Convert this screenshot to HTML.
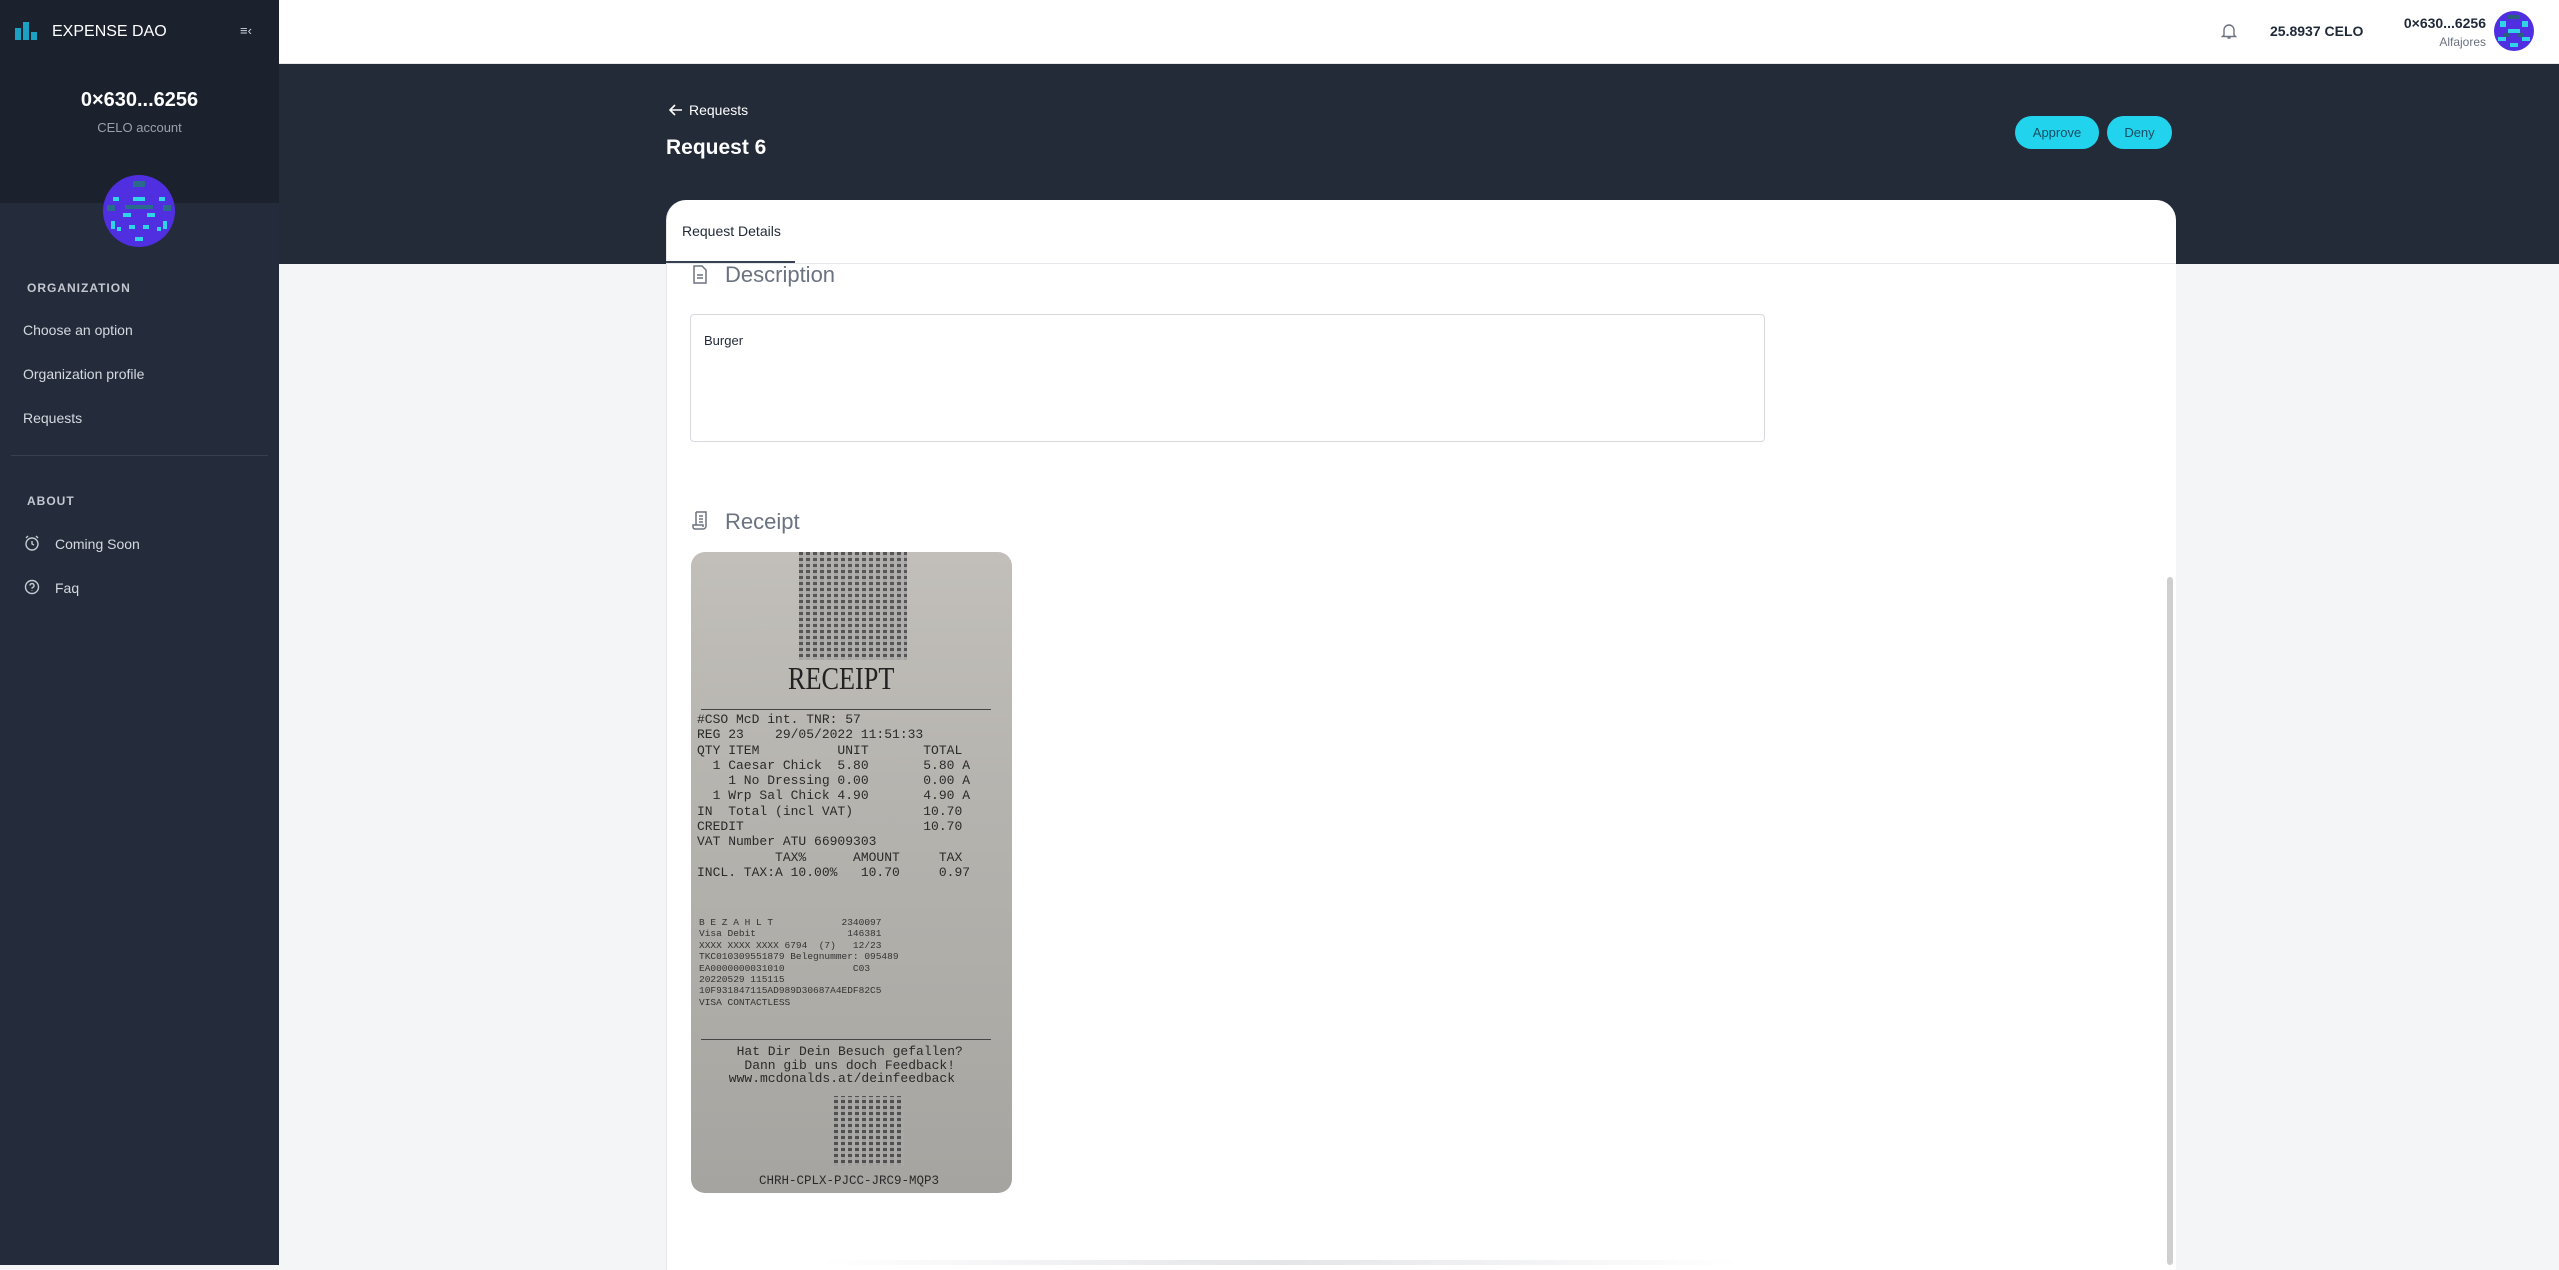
<!DOCTYPE html>
<html><head><meta charset="utf-8"><style>
*{margin:0;padding:0;box-sizing:border-box}
body{width:2559px;height:1265px;overflow:hidden;background:#f4f5f7;font-family:"Liberation Sans",sans-serif;position:relative}
.a{position:absolute}
#sb{left:0;top:0;width:279px;height:1265px;background:#242c3b}
#sbt{left:0;top:0;width:279px;height:203px;background:#1b212d}
.nav{color:#d5d9e0;font-size:14px}
.sec{color:#c3c8d0;font-size:12px;font-weight:bold;letter-spacing:1px}
.mono{font-family:"Liberation Mono",monospace;color:#2a2a2a;white-space:pre;line-height:1}
.qr{background:repeating-linear-gradient(0deg,rgba(170,170,170,.9) 0 3px,transparent 3px 6px),repeating-linear-gradient(90deg,#333 0 4px,#aaa 4px 7px);opacity:.75}
</style></head><body>
<div class="a" id="sb"></div><div class="a" id="sbt"></div>
<svg class="a" style="left:15px;top:22px" width="24" height="18"><rect x="0" y="6" width="6" height="12" fill="#1aa1c4"/><rect x="8" y="0" width="6" height="18" fill="#1aa1c4"/><rect x="16" y="10" width="6" height="8" fill="#1aa1c4"/></svg>
<div class="a" style="left:52px;top:23px;color:#fff;font-size:16px">EXPENSE DAO</div>
<div class="a" style="left:240px;top:23px;color:#cfd4db;font-size:13px">≡‹</div>
<div class="a" style="left:0;width:279px;top:89px;text-align:center;color:#fff;font-size:20px;font-weight:bold">0×630...6256</div>
<div class="a" style="left:0;width:279px;top:120px;text-align:center;color:#9aa1ad;font-size:13px">CELO account</div>
<svg class="a" style="left:103px;top:175px" width="72" height="72"><circle cx="36" cy="36" r="36" fill="#4f2fe0"/><g fill="#2fd4e8"><rect x="10" y="22" width="6" height="4"/><rect x="56" y="22" width="6" height="4"/><rect x="30" y="22" width="12" height="4"/><rect x="20" y="38" width="8" height="4"/><rect x="44" y="38" width="8" height="4"/><rect x="8" y="46" width="4" height="8"/><rect x="60" y="46" width="4" height="8"/><rect x="32" y="62" width="8" height="4"/><rect x="14" y="52" width="4" height="4"/><rect x="54" y="52" width="4" height="4"/><rect x="26" y="50" width="6" height="4"/><rect x="40" y="50" width="6" height="4"/></g><g fill="#2a6a8a"><rect x="30" y="6" width="12" height="6"/><rect x="22" y="30" width="28" height="4"/><rect x="4" y="30" width="8" height="6"/><rect x="60" y="30" width="8" height="6"/></g></svg>
<div class="a sec" style="left:27px;top:281px">ORGANIZATION</div>
<div class="a nav" style="left:23px;top:322px">Choose an option</div>
<div class="a nav" style="left:23px;top:366px">Organization profile</div>
<div class="a nav" style="left:23px;top:410px">Requests</div>
<div class="a" style="left:11px;top:455px;width:257px;height:1px;background:#36404f"></div>
<div class="a sec" style="left:27px;top:494px">ABOUT</div>
<svg class="a" style="left:24px;top:535px" width="16" height="16" fill="none" stroke="#c5cad2" stroke-width="1.4"><circle cx="8" cy="9" r="6"/><path d="M8 6v3l2 1M2 3l2-2M14 3l-2-2"/></svg>
<div class="a nav" style="left:55px;top:536px">Coming Soon</div>
<svg class="a" style="left:24px;top:579px" width="16" height="16" fill="none" stroke="#c5cad2" stroke-width="1.4"><circle cx="8" cy="8" r="6.5"/><path d="M6 6.5a2 2 0 1 1 2.5 2c-.5.2-.5.6-.5 1.2M8 11.5v.5"/></svg>
<div class="a nav" style="left:55px;top:580px">Faq</div>

<div class="a" style="left:279px;top:0;width:2280px;height:64px;background:#fff;border-bottom:1px solid #e5e7eb"></div>
<svg class="a" style="left:2221px;top:22px" width="16" height="18" fill="none" stroke="#6b7280" stroke-width="1.4"><path d="M3 13V8a5 5 0 0 1 10 0v5l1.5 1.5h-13z M6.5 16h3"/></svg>
<div class="a" style="left:2270px;top:23px;color:#1f2937;font-size:14px;font-weight:bold">25.8937 CELO</div>
<div class="a" style="left:2380px;width:106px;text-align:right;top:15px;color:#1f2937;font-size:14px;font-weight:bold">0×630...6256</div>
<div class="a" style="left:2380px;width:106px;text-align:right;top:35px;color:#6b7280;font-size:12px">Alfajores</div>
<svg class="a" style="left:2494px;top:11px" width="40" height="40"><circle cx="20" cy="20" r="20" fill="#4f2fe0"/><g fill="#2fd4e8"><rect x="6" y="10" width="6" height="6"/><rect x="28" y="10" width="6" height="6"/><rect x="14" y="18" width="12" height="4"/><rect x="4" y="26" width="8" height="4"/><rect x="28" y="26" width="8" height="4"/><rect x="16" y="32" width="8" height="4"/></g><g fill="#26607a"><rect x="14" y="4" width="12" height="4"/><rect x="10" y="22" width="6" height="4"/><rect x="24" y="22" width="6" height="4"/></g></svg>

<div class="a" style="left:279px;top:64px;width:2280px;height:200px;background:#232a38"></div>
<svg class="a" style="left:668px;top:102px" width="16" height="16" fill="none" stroke="#fff" stroke-width="1.6"><path d="M14 8H2M7 3L2 8l5 5"/></svg>
<div class="a" style="left:689px;top:102px;color:#fff;font-size:14px">Requests</div>
<div class="a" style="left:666px;top:136px;color:#fff;font-size:21px;font-weight:bold">Request 6</div>
<div class="a" style="left:2015px;top:116px;width:84px;height:33px;border-radius:17px;background:#22d3ee;color:#164e63;font-size:13px;text-align:center;line-height:33px">Approve</div>
<div class="a" style="left:2107px;top:116px;width:65px;height:33px;border-radius:17px;background:#22d3ee;color:#164e63;font-size:13px;text-align:center;line-height:33px">Deny</div>

<div class="a" style="left:666px;top:200px;width:1510px;height:1070px;background:#fff;border-radius:20px 20px 0 0;border-left:1px solid #e5e7eb"></div>
<div class="a" style="left:682px;top:223px;color:#1f2937;font-size:14px">Request Details</div>
<div class="a" style="left:666px;top:263px;width:1510px;height:1px;background:#e5e7eb"></div>
<div class="a" style="left:666px;top:261px;width:129px;height:2px;background:#374151"></div>
<div class="a" style="left:2167px;top:577px;width:6px;height:688px;border-radius:3px;background:#cfcfcf"></div>

<svg class="a" style="left:692px;top:265px" width="16" height="19" fill="none" stroke="#6b7280" stroke-width="1.5"><path d="M2 1h8l4 4v13H2z M5 10h6M5 13h6"/></svg>
<div class="a" style="left:725px;top:262px;color:#6b7280;font-size:22px">Description</div>
<div class="a" style="left:690px;top:314px;width:1075px;height:128px;border:1.5px solid #d6d9de;border-radius:4px"></div>
<div class="a" style="left:704px;top:333px;color:#1f2937;font-size:13px">Burger</div>
<svg class="a" style="left:692px;top:511px" width="17" height="19" fill="none" stroke="#6b7280" stroke-width="1.5"><path d="M4 1h10v14a3 3 0 0 1-3 3H3a2 2 0 0 1-2-2v-2h10v2 M4 1v13 M7 5h4M7 8h4M7 11h4"/></svg>
<div class="a" style="left:725px;top:509px;color:#6b7280;font-size:22px">Receipt</div>

<div class="a" style="left:691px;top:552px;width:321px;height:641px;border-radius:14px;background:linear-gradient(180deg,#c2bfba,#b5b3ae 40%,#aeaca7 70%,#a6a4a0);overflow:hidden">
<div class="a qr" style="left:108px;top:0;width:108px;height:108px"></div>
<div class="a mono" style="left:97px;top:110px;font-size:32px;font-family:'Liberation Serif',serif;color:#222;transform:scaleX(.82);transform-origin:left">RECEIPT</div>
<div class="a" style="left:10px;top:157px;width:290px;height:1px;background:#444"></div>
<div class="a mono" style="left:6px;top:160px;font-size:13px;line-height:15.3px">#CSO McD int. TNR: 57
REG 23    29/05/2022 11:51:33
QTY ITEM          UNIT       TOTAL
  1 Caesar Chick  5.80       5.80 A
    1 No Dressing 0.00       0.00 A
  1 Wrp Sal Chick 4.90       4.90 A
IN  Total (incl VAT)         10.70
CREDIT                       10.70
VAT Number ATU 66909303
          TAX%      AMOUNT     TAX
INCL. TAX:A 10.00%   10.70     0.97</div>
<div class="a mono" style="left:8px;top:365px;font-size:9.5px;line-height:1.2;color:#333">B E Z A H L T            2340097
Visa Debit                146381
XXXX XXXX XXXX 6794  (7)   12/23
TKC010309551879 Belegnummer: 095489
EA0000000031010            C03
20220529 115115
10F931847115AD989D30687A4EDF82C5
VISA CONTACTLESS</div>
<div class="a" style="left:10px;top:487px;width:290px;height:1px;background:#444"></div>
<div class="a mono" style="left:30px;top:493px;font-size:13px;line-height:1.05;text-align:center">  Hat Dir Dein Besuch gefallen?
  Dann gib uns doch Feedback!
www.mcdonalds.at/deinfeedback</div>
<div class="a qr" style="left:143px;top:544px;width:70px;height:70px"></div>
<div class="a mono" style="left:68px;top:623px;font-size:12.5px">CHRH-CPLX-PJCC-JRC9-MQP3</div>
</div>
<div class="a" style="left:820px;top:1260px;width:920px;height:5px;background:linear-gradient(90deg,transparent,#e4e5e8,transparent)"></div>
</body></html>
